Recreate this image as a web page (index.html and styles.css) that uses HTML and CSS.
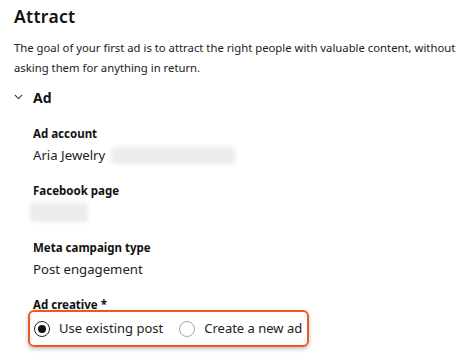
FILE: index.html
```html
<!DOCTYPE html>
<html>
<head>
<meta charset="utf-8">
<link rel="stylesheet" href="styles.css">
</head>
<body>
<div class="page">
  <h1 class="title">Attract</h1>
  <p class="intro">The goal of your first ad is to attract the right people with valuable content, without asking them for anything in return.</p>
  <div class="section-head">
    <svg class="chev" width="9" height="6" viewBox="0 0 9 6"><path d="M0.8 0.8 L4.5 4.6 L8.2 0.8" fill="none" stroke="#33475b" stroke-width="1.1"/></svg>
    <span class="section-title">Ad</span>
  </div>
  <div class="fields">
    <div class="field">
      <div class="label">Ad account</div>
      <div class="value">Aria Jewelry <span class="blur blur-account"></span></div>
    </div>
    <div class="field">
      <div class="label">Facebook page</div>
      <div class="value"><span class="blur blur-page"></span></div>
    </div>
    <div class="field">
      <div class="label">Meta campaign type</div>
      <div class="value">Post engagement</div>
    </div>
    <div class="field">
      <div class="label">Ad creative *</div>
      <div class="radio-box">
        <label class="radio"><span class="dot checked"></span>Use existing post</label>
        <label class="radio"><span class="dot"></span>Create a new ad</label>
      </div>
    </div>
  </div>
</div>
</body>
</html>
```
FILE: styles.css
```css
html, body { margin: 0; padding: 0; background: #fff; }
body { font-family: "Noto Sans", "DejaVu Sans", sans-serif; color: #1f1f1f; }
.page { padding: 4px 14px 0 14px; }
.title { font-size: 17.5px; font-weight: 600; margin: 0; line-height: 24px; letter-spacing: 0.3px; color: #111; }
.intro { font-size: 11.3px; line-height: 20px; margin: 10px 0 0 0; color: #222; width: 445px; }
.section-head { display: flex; align-items: center; margin-top: 9px; height: 20px; }
.chev { margin-left: 0; margin-right: 10px; }
.section-title { font-size: 14px; font-weight: 700; color: #111; }
.fields { padding-left: 19px; margin-top: 19px; }
.field { margin-bottom: 17px; }
.label { font-size: 11.5px; font-weight: 700; line-height: 16px; color: #111; }
.value { font-size: 13.2px; line-height: 22px; margin-top: 2px; color: #222; display: flex; align-items: center; min-height: 22px; }
.blur { display: inline-block; background: #ececec; filter: blur(2px); border-radius: 2px; }
.blur-account { width: 124px; height: 17px; margin-left: 6px; }
.blur-page { width: 58px; height: 19px; margin-left: -3px; }
.radio-box { display: inline-flex; align-items: center; margin-left: -5px; margin-top: -3px; padding: 8px 5px 8px 4px; border: 2.5px solid #f05623; border-radius: 6px; box-shadow: 0 2px 4px rgba(0,0,0,0.25); }
.radio { display: flex; align-items: center; font-size: 13px; line-height: 17px; color: #222; }
.radio + .radio { margin-left: 16px; }
.dot { width: 16px; height: 16px; box-sizing: border-box; border: 1px solid #a0a6ad; border-radius: 50%; margin-right: 9px; display: inline-flex; align-items: center; justify-content: center; }
.dot.checked { border: 1.5px solid #222; }
.dot.checked::after { content: ""; width: 8px; height: 8px; border-radius: 50%; background: #111; }
```
